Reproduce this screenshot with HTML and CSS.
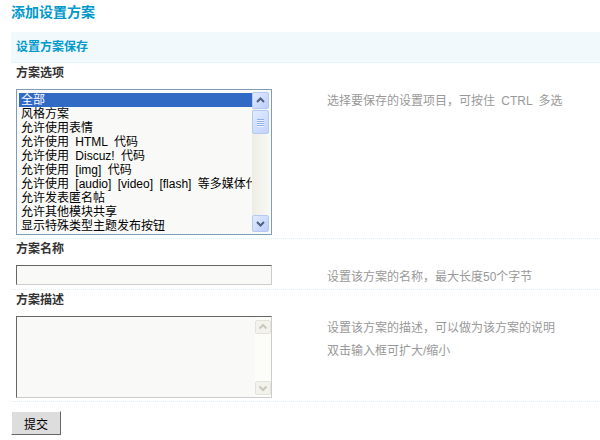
FILE: index.html
```html
<!DOCTYPE html>
<html lang="zh-CN">
  <head>
    <meta charset="UTF-8" />
    <title>添加设置方案</title>
    <link rel="stylesheet" href="styles.css">
  </head>
  <body>
    <div class="wrap">
      <h3 class="page-title">添加设置方案</h3>

      <div class="partition">设置方案保存</div>

      <!-- 方案选项 -->
      <div class="field-label">方案选项</div>
      <div class="field-body">
        <div class="rowform">
          <div class="listbox">
            <ul class="list-items">
              <li class="selected">全部</li>
              <li>风格方案</li>
              <li>允许使用表情</li>
              <li>允许使用 HTML 代码</li>
              <li>允许使用 Discuz! 代码</li>
              <li>允许使用 [img] 代码</li>
              <li>允许使用 [audio] [video] [flash] 等多媒体代码</li>
              <li>允许发表匿名帖</li>
              <li>允许其他模块共享</li>
              <li>显示特殊类型主题发布按钮</li>
            </ul>
            <div class="vscroll">
              <div class="sb-btn">
                <svg width="15" height="15" viewBox="0 0 15 15"><polyline points="4,9 7.5,5.5 11,9" fill="none" stroke="#4d6185" stroke-width="2"/></svg>
              </div>
              <div class="sb-thumb">
                <span></span><span></span><span></span><span></span>
              </div>
              <div class="sb-track"></div>
              <div class="sb-btn">
                <svg width="15" height="15" viewBox="0 0 15 15"><polyline points="4,6 7.5,9.5 11,6" fill="none" stroke="#4d6185" stroke-width="2"/></svg>
              </div>
            </div>
          </div>
        </div>
        <div class="tips">选择要保存的设置项目，可按住 CTRL 多选</div>
      </div>

      <!-- 方案名称 -->
      <div class="field-label">方案名称</div>
      <div class="field-body">
        <div class="rowform">
          <div class="txt"></div>
        </div>
        <div class="tips">设置该方案的名称，最大长度50个字节</div>
      </div>

      <!-- 方案描述 -->
      <div class="field-label">方案描述</div>
      <div class="field-body">
        <div class="rowform">
          <div class="textbox">
            <div class="textbox-area"></div>
            <div class="vscroll disabled">
              <div class="sb-btn">
                <svg width="14" height="14" viewBox="0 0 14 14"><polyline points="3.5,8.5 7,5 10.5,8.5" fill="none" stroke="#c9c8bd" stroke-width="2"/></svg>
              </div>
              <div class="sb-track"></div>
              <div class="sb-btn">
                <svg width="14" height="14" viewBox="0 0 14 14"><polyline points="3.5,5.5 7,9 10.5,5.5" fill="none" stroke="#c9c8bd" stroke-width="2"/></svg>
              </div>
            </div>
          </div>
        </div>
        <div class="tips">设置该方案的描述，可以做为该方案的说明<br />双击输入框可扩大/缩小</div>
      </div>

      <div class="actions">
        <button class="btn">提交</button>
      </div>
    </div>
  </body>
</html>
```

FILE: styles.css
```css
/* Base */
* {
  box-sizing: border-box;
  margin: 0;
  padding: 0;
}

body {
  font-family: "Liberation Sans", "Noto Sans CJK SC", sans-serif;
  font-size: 12px;
  color: #333;
  background: #fff;
  word-spacing: 3px;
}

.wrap {
  padding-left: 11px;
  overflow: hidden;
}

/* Title */
.page-title {
  font-size: 14px;
  line-height: 24px;
  color: #09c;
  font-weight: bold;
  margin-bottom: 8px;
}

.partition {
  height: 31px;
  line-height: 30px;
  padding-left: 5px;
  background: #f2f9fd;
  border-bottom: 1px dotted #deeffb;
  color: #09c;
  font-weight: bold;
}

/* Rows */
.field-label {
  height: 23px;
  line-height: 20px;
  padding: 0 5px 3px;
  font-weight: bold;
  color: #333;
}

.field-body {
  display: flex;
  align-items: flex-start;
  padding: 3px 0;
  border-bottom: 1px dotted #deeffb;
}

.rowform {
  width: 316px;
  flex-shrink: 0;
  padding-left: 5px;
}

/* tips never make the row taller than its field */
.tips {
  color: #999;
  line-height: 23px;
  padding-top: 1px;
  margin-bottom: -10px;
}

/* Select list */
.listbox {
  width: 256px;
  height: 146px;
  display: flex;
  padding: 2px;
  border: 1px solid #7f9db9;
  background: #f9f9f7;
}

.list-items {
  list-style: none;
  flex: 1;
  min-width: 0;
  padding-top: 1px;
}

.list-items li {
  height: 14px;
  line-height: 14px;
  padding-left: 2px;
  color: #000;
  white-space: nowrap;
  overflow: hidden;
}

.list-items li.selected {
  background: #316ac5;
  color: #fff;
}

/* Scrollbar */
.vscroll {
  width: 17px;
  display: flex;
  flex-direction: column;
  background: linear-gradient(to right, #eeede5, #f8f8f4);
}

.sb-btn {
  height: 17px;
  display: flex;
  align-items: center;
  justify-content: center;
  border: 1px solid #b4c8f6;
  border-radius: 2px;
  background: linear-gradient(135deg, #e2ebfe, #bccdf9);
}

.sb-thumb {
  height: 24px;
  margin-top: 1px;
  display: flex;
  flex-direction: column;
  align-items: center;
  justify-content: center;
  gap: 1px;
  border: 1px solid #b4c8f6;
  border-radius: 2px;
  background: linear-gradient(135deg, #e2ebfe, #c2d3fb);
}

.sb-thumb span {
  width: 7px;
  height: 1px;
  background: #8eaef0;
  box-shadow: 0 1px 0 #eef3fe;
}

.sb-track {
  flex: 1;
}

.vscroll.disabled {
  width: 16px;
  background: #fcfcf8;
  padding: 3px 0 2px;
}

.vscroll.disabled .sb-btn {
  height: 14px;
  border-color: #e4e3db;
  background: #f3f2ec;
}

/* Inputs */
.txt {
  width: 256px;
  height: 20px;
  margin-bottom: 1px;
  border: 1px solid;
  border-color: #666 #ccc #ccc #666;
  background: #f9f9f7;
}

.textbox {
  width: 256px;
  height: 82px;
  display: flex;
  border: 1px solid;
  border-color: #666 #ccc #ccc #666;
  background: #f9f9f7;
}

.textbox-area {
  flex: 1;
}

/* Submit */
.actions {
  padding-top: 9px;
}

.btn {
  display: block;
  width: 50px;
  height: 24px;
  font-family: "Liberation Sans", "Noto Sans CJK SC", sans-serif;
  font-size: 12px;
  color: #000;
  background: #ddd;
  border: 1px solid;
  border-color: #fff #666 #666 #fff;
}
```
